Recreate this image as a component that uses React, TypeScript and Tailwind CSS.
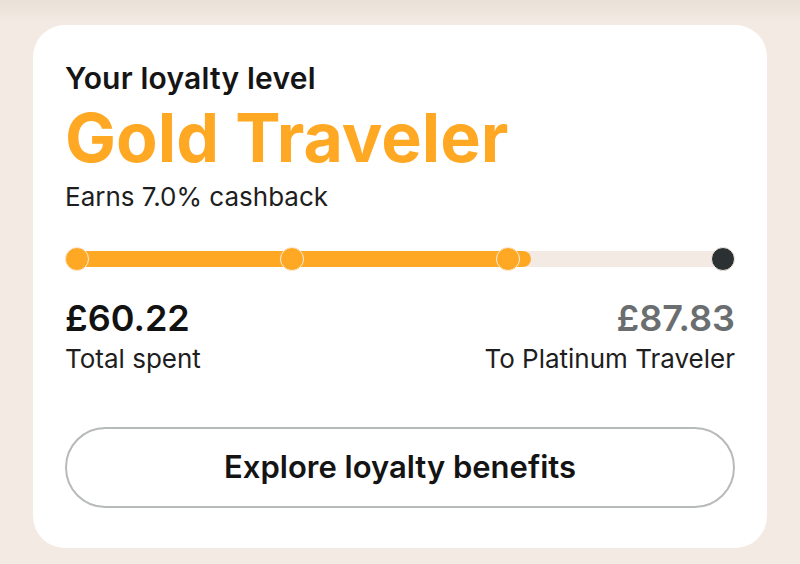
import React from "react";

export default function App() {
  const stops = [0, 1, 2, 3];
  return (
    <div
      className="w-[800px] h-[564px] overflow-hidden bg-[linear-gradient(to_bottom,#e9e0d7_0px,#f3ebe3_22px)] pt-[25px] px-[33px]"
      style={{ fontFamily: "Inter, 'Noto Sans', sans-serif" }}
    >
      <div className="bg-white rounded-[32px] px-8 pt-[35px] pb-[40px] h-[523px]">
        <div className="text-[30px] leading-[36px] font-semibold text-[#151515] tracking-[0.2px]">
          Your loyalty level
        </div>
        <div className="mt-[7px] text-[68px] leading-[68px] font-bold text-[#ffa824] tracking-[0px]">
          Gold Traveler
        </div>
        <div className="mt-[10px] text-[26px] leading-[32px] font-normal text-[#1e1e1e]">
          Earns 7.0% cashback
        </div>

        <div className="mt-[34px] relative h-[24px] flex items-center">
          <div className="absolute left-0 right-0 top-[4px] h-[16px] rounded-full bg-[#f3ebe3]" />
          <div className="absolute left-0 top-[4px] h-[16px] w-[466px] rounded-full bg-[#ffa824]" />
          <div className="relative w-full flex justify-between items-center">
            {stops.map((i) => (
              <div
                key={i}
                className={
                  i < 3
                    ? "w-[24px] h-[24px] rounded-full bg-[#ffa824] border border-[#fbeede]"
                    : "w-[24px] h-[24px] rounded-full bg-[#2b3033] border border-[#f3ebe3]"
                }
              />
            ))}
          </div>
        </div>

        <div className="mt-[27px] flex justify-between">
          <div>
            <div className="text-[36px] leading-[40px] font-semibold text-[#121212]">£60.22</div>
            <div className="mt-[5px] text-[26px] leading-[32px] text-[#1e1e1e]">Total spent</div>
          </div>
          <div className="text-right">
            <div className="text-[36px] leading-[40px] font-semibold text-[#6b6e70]">£87.83</div>
            <div className="mt-[5px] text-[26px] leading-[32px] text-[#1e1e1e]">To Platinum Traveler</div>
          </div>
        </div>

        <button className="mt-[52px] w-full h-[81px] rounded-full border-2 border-[#b7baba] bg-white flex items-center justify-center text-[31px] font-semibold text-[#141414]">
          Explore loyalty benefits
        </button>
      </div>
    </div>
  );
}
